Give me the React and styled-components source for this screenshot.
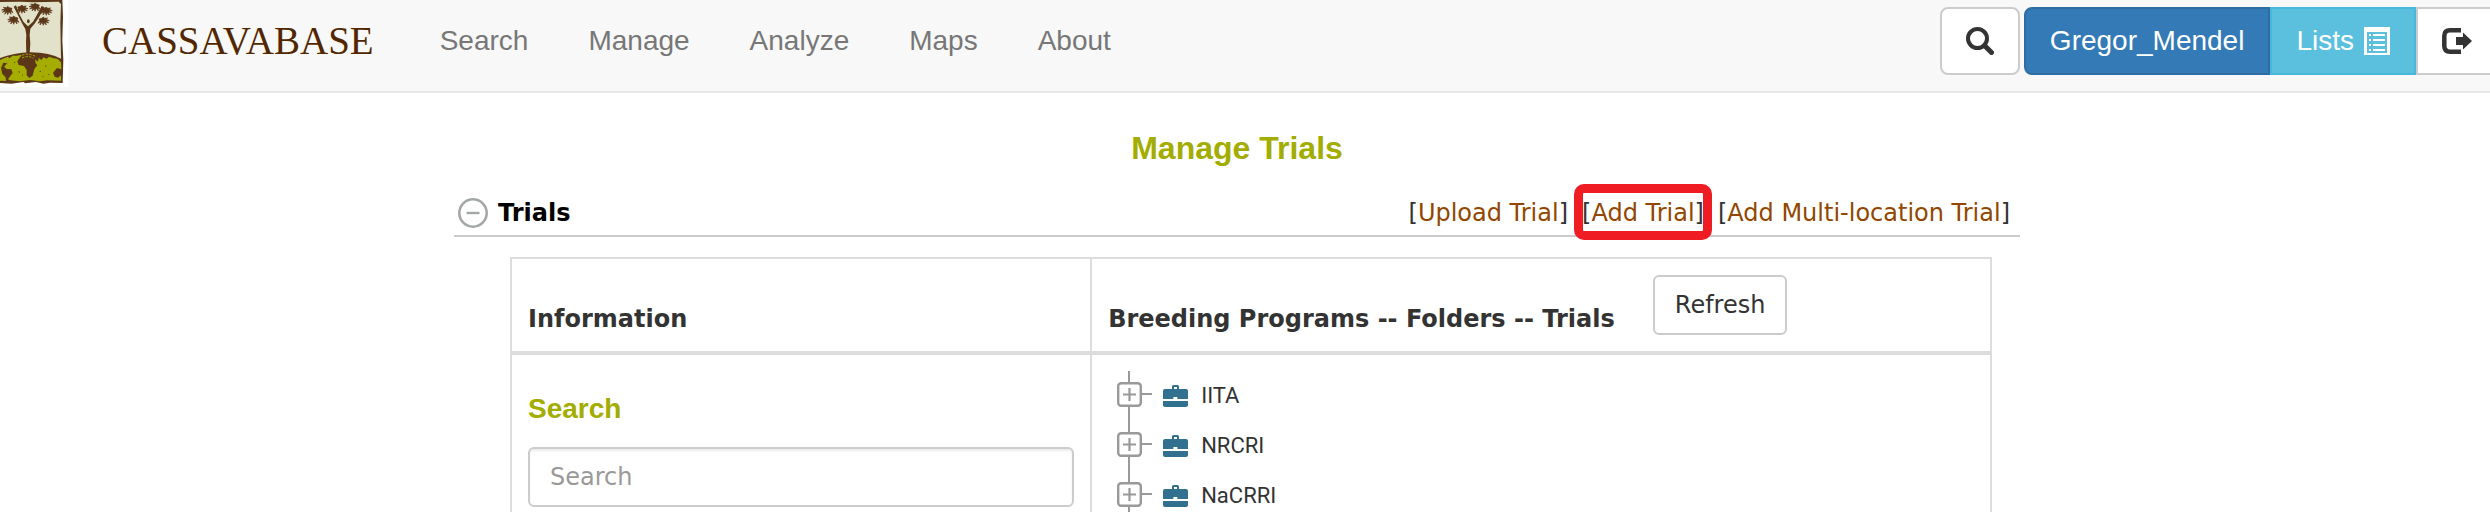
import React from "react";
import styled, { createGlobalStyle, css } from "styled-components";

const sans = '"Liberation Sans", Arial, Helvetica, sans-serif';
const verdana = 'Verdana, "DejaVu Sans", sans-serif';

const GlobalStyle = createGlobalStyle`
  *, *::before, *::after { box-sizing: border-box; }
  body {
    margin: 0;
    background: #fff;
    color: #333;
    font-family: ${verdana};
    font-size: 24px;
    line-height: 32px;
    overflow-x: hidden;
  }
`;

const Header = styled.header`
  display: flex;
  align-items: flex-start;
  height: 93px;
  background: #f8f8f8;
  border-bottom: 2px solid #e7e7e7;
  font-family: ${sans};
  overflow: hidden;
`;

const HomeLink = styled.a`
  display: flex;
  flex: none;
  text-decoration: none;
`;

const Brand = styled.a`
  margin-left: 34px;
  color: #522700;
  font-family: "Liberation Serif", "Times New Roman", serif;
  font-size: 39px;
  line-height: 82px;
  text-decoration: none;
`;

const Nav = styled.nav`
  display: flex;
  flex: 1;
  margin-left: 36px;
`;

const NavLink = styled.a`
  padding: 0 30px;
  color: #777;
  font-size: 28px;
  line-height: 82px;
  text-decoration: none;
`;

const Tools = styled.div`
  display: flex;
  flex: none;
  gap: 4px;
  margin: 7px -8px 0 0;
`;

const ButtonGroup = styled.div`
  display: flex;
`;

const tones = {
  plain: css`background: #fff; border-color: #ccc; color: #333;`,
  primary: css`background: #337ab7; border-color: #2e6da4; color: #fff;`,
  info: css`background: #5bc0de; border-color: #46b8da; color: #fff;`,
};

const corners = { all: "8px", left: "8px 0 0 8px", none: "0", right: "0 8px 8px 0" };

const ToolButton = styled.button`
  display: flex;
  align-items: center;
  gap: 10px;
  height: 68px;
  padding: 0 24px;
  border: 2px solid;
  border-radius: ${(p) => corners[p.$corners || "all"]};
  font-family: ${sans};
  font-size: 28px;
  line-height: 32px;
  cursor: pointer;
  ${(p) => tones[p.$tone || "plain"]}
`;

const Content = styled.main`
  max-width: 1582px;
  margin: 0 auto;
  padding: 37px 16px 0 0;
`;

const heading = css`
  color: #a2ad00;
  font-family: ${sans};
  font-weight: bold;
`;

const Title = styled.h1`
  ${heading}
  margin: 0 0 33px;
  font-size: 32px;
  line-height: 36px;
  text-align: center;
`;

const SectionBar = styled.div`
  display: flex;
  align-items: center;
  justify-content: space-between;
  height: 38px;
  padding: 0 10px 8px 4px;
  border-bottom: 2px solid #ccc;
`;

const SectionName = styled.div`
  display: flex;
  align-items: center;
  gap: 10px;
`;

const SectionTitle = styled.h2`
  margin: 0;
  color: #000;
  font-size: 24px;
  line-height: 28px;
`;

const IconButton = styled.button`
  display: flex;
  padding: 0;
  border: 0;
  background: none;
  cursor: pointer;
`;

const Actions = styled.div`
  display: flex;
  gap: 14px;
  line-height: 28px;
  white-space: nowrap;
`;

const Action = styled.span`
  position: relative;
  ${(p) =>
    p.$marked &&
    css`
      &::after {
        content: "";
        position: absolute;
        inset: -15px -8px -13px;
        border: 9px solid #ef1c24;
        border-radius: 10px;
        pointer-events: none;
      }
    `}
`;

const ActionLink = styled.a`
  color: #924600;
  text-decoration: none;
`;

const TableWrap = styled.div`
  padding: 20px 28px 0 56px;
`;

const Table = styled.table`
  width: 100%;
  table-layout: fixed;
  border-collapse: collapse;
`;

const HeadCell = styled.th`
  width: ${(p) => p.$width};
  padding: 16px;
  border: 2px solid #ddd;
  border-bottom-width: 4px;
  text-align: left;
  vertical-align: bottom;
`;

const BodyCell = styled.td`
  padding: 16px;
  border: 2px solid #ddd;
  vertical-align: top;
`;

const HeadRow = styled.div`
  display: flex;
  align-items: flex-end;
  gap: 38px;
`;

const RefreshButton = styled.button`
  height: 60px;
  padding: 0 20px;
  border: 2px solid #ccc;
  border-radius: 6px;
  background: #fff;
  color: #333;
  font-family: ${verdana};
  font-size: 24px;
  cursor: pointer;
`;

const SearchTitle = styled.label`
  ${heading}
  display: block;
  margin: 22px 0;
  font-size: 28px;
  line-height: 32px;
`;

const SearchInput = styled.input`
  display: block;
  width: 100%;
  height: 60px;
  padding: 0 20px;
  border: 2px solid #ccc;
  border-radius: 6px;
  background: #fff;
  box-shadow: inset 0 2px 2px rgba(0, 0, 0, 0.075);
  color: #555;
  font-family: ${verdana};
  font-size: 24px;
  &::placeholder { color: #999; opacity: 1; }
`;

const Tree = styled.ul`
  margin: 0;
  padding: 0 0 0 9px;
  list-style: none;
`;

const TreeRow = styled.li`
  display: flex;
`;

const Rail = styled.div`
  display: flex;
  flex-direction: column;
`;

const RailLine = styled.span`
  width: 2px;
  height: ${(p) => p.$length};
  margin-left: 11px;
  background: #999;
`;

const Stub = styled.span`
  width: 10px;
  height: 2px;
  margin: 22px 11px 0 0;
  background: #999;
`;

const TreeItem = styled.div`
  display: flex;
  align-items: center;
  gap: 13px;
  height: 27px;
  margin-top: 11px;
  font-family: Roboto, sans-serif;
  font-size: 22px;
`;

function Leaf({ x, y, flip }) {
  return (
    <path
      transform={`translate(${x} ${y}) scale(${flip ? -1 : 1} 1)`}
      stroke="#5b3718"
      strokeWidth="2"
      d="M14 -6 L6 -8 L1 -12 L-3 -8 L-12 -9 L-7 -5 L-17 -1 L-8 -1 L-15 6 L-5 3 L-8 12 L-1 5 L1 13 L5 4 L11 12 L10 3 L17 7 L12 -1 Z"
    />
  );
}

function Logo() {
  return (
    <svg width="68" height="87" viewBox="0 0 204 261" role="img" aria-label="Cassavabase">
      <path fill="#fff" d="M0 0H204V261H0Z" />
      <path fill="#5b3718" d="M0 0H187L189 50L187 120L190 180L188 249L150 248L130 251L108 246L76 250L70 246L35 251L0 249Z" />
      <path fill="#e2e2cb" d="M0 6L60 5L100 7L176 5L183 12L181 70L183 176Q150 158 92 157Q40 159 0 174Z" />
      <path
        fill="#a4ad00"
        d="M0 180L14 174L24 170L28 175L38 167L52 167L65 164L61 170L52 184L56 195L72 198L80 210L80 226L88 234L98 227L103 207L112 196L107 190L105 178L114 185L116 174L125 180L130 172L140 176L147 170L158 174L172 176L177 181L183 187L184 208L171 204L159 218L164 230L174 233L183 226V242L142 241L120 244L90 240L60 244L31 241L24 238L31 228L38 219L34 208L20 207L12 200L22 190L10 188L3 204L7 222L17 232L18 243L0 242Z"
      />
      <g fill="#5b3718">
        <path d="M79 160L78 125L79 105L76 87L66 70L55 47L41 20L48 16L58 42L70 65L84 79L99 65L111 44L125 18L134 22L116 53L103 72L91 86L89 106L91 130L89 160Z" />
        <ellipse cx="85" cy="64" rx="4" ry="6" />
        <Leaf x="22" y="31" />
        <Leaf x="67" y="27" flip />
        <Leaf x="40" y="60" />
        <Leaf x="104" y="21" />
        <Leaf x="140" y="33" flip />
        <Leaf x="131" y="63" flip />
        <path d="M55 213l5 3-3 3zM66 223l4 2-4 2zM120 211l3 4-4 1zM135 196l5 2-4 2zM145 221l4 3-4 1zM127 228l4 1-3 3zM42 185l4 3-3 2z" />
      </g>
      <path fill="none" stroke="#a4ad00" strokeWidth="3" strokeDasharray="7 4" d="M56 170Q84 155 109 171M66 174Q84 165 101 175" />
    </svg>
  );
}

function SearchIcon() {
  return (
    <svg width="28" height="28" viewBox="0 0 28 28" fill="none" stroke="#333" aria-hidden="true">
      <circle cx="11.5" cy="11.5" r="9.5" strokeWidth="4" />
      <path d="M18.5 18.5L25.5 25.5" strokeWidth="5" strokeLinecap="round" />
    </svg>
  );
}

function ListIcon() {
  return (
    <svg width="26" height="28" viewBox="0 0 26 28" fill="#fff" aria-hidden="true">
      <path fillRule="evenodd" d="M0 0H26V28H0ZM3 5V26H23V5Z" />
      <path d="M5 7h2v2H5zM9 7h12v2H9zM5 12h2v2H5zM9 12h12v2H9zM5 17h2v2H5zM9 17h12v2H9zM5 22h2v2H5zM9 22h12v2H9z" />
    </svg>
  );
}

function LogoutIcon() {
  return (
    <svg width="30" height="28" viewBox="0 0 30 28" aria-hidden="true">
      <path fill="none" stroke="#333" strokeWidth="4.5" d="M19 3.3H8Q2.3 3.3 2.3 9V19Q2.3 24.7 8 24.7H19" />
      <path fill="#333" d="M14 10H21V5.5L30 14L21 22.5V18H14Z" />
    </svg>
  );
}

function CollapseIcon() {
  return (
    <svg width="30" height="30" viewBox="0 0 30 30" fill="none" stroke="#a3a8a7" aria-hidden="true">
      <circle cx="15" cy="15" r="13.7" strokeWidth="2.6" />
      <path d="M8.5 15H21.5" strokeWidth="2.4" />
    </svg>
  );
}

function ExpandIcon() {
  return (
    <svg width="25" height="25" viewBox="0 0 25 25" fill="none" stroke="#999" aria-hidden="true">
      <rect x="1.2" y="1.2" width="22.6" height="22.6" rx="3" strokeWidth="2.4" />
      <path d="M6 12.5H19M12.5 6V19" strokeWidth="2.2" />
    </svg>
  );
}

function BriefcaseIcon() {
  return (
    <svg width="25" height="22" viewBox="0 0 75 66" fill="#31708f" aria-hidden="true">
      <path
        fillRule="evenodd"
        d="M27 12V5Q27 0 32 0H43Q48 0 48 5V12H69Q75 12 75 18V42H43V36H31V42H0V18Q0 12 6 12ZM33 6V12H42V6Z"
      />
      <path d="M0 48H75V60Q75 66 69 66H6Q0 66 0 60Z" />
    </svg>
  );
}

const menu = ["Search", "Manage", "Analyze", "Maps", "About"];
const programs = ["IITA", "NRCRI", "NaCRRI"];
const actions = [
  { label: "Upload Trial" },
  { label: "Add Trial", marked: true },
  { label: "Add Multi-location Trial" },
];

export default function App() {
  return (
    <>
      <GlobalStyle />
      <Header>
        <HomeLink href="#home"><Logo /></HomeLink>
        <Brand href="#home">CASSAVABASE</Brand>
        <Nav>
          {menu.map((name) => (
            <NavLink key={name} href={`#${name.toLowerCase()}`}>{name}</NavLink>
          ))}
        </Nav>
        <Tools>
          <ToolButton aria-label="Search site"><SearchIcon /></ToolButton>
          <ButtonGroup>
            <ToolButton $tone="primary" $corners="left">Gregor_Mendel</ToolButton>
            <ToolButton $tone="info" $corners="none">Lists <ListIcon /></ToolButton>
            <ToolButton $corners="right" aria-label="Log out"><LogoutIcon /></ToolButton>
          </ButtonGroup>
        </Tools>
      </Header>
      <Content>
        <Title>Manage Trials</Title>
        <SectionBar>
          <SectionName>
            <IconButton aria-label="Collapse trials"><CollapseIcon /></IconButton>
            <SectionTitle>Trials</SectionTitle>
          </SectionName>
          <Actions>
            {actions.map(({ label, marked }) => (
              <Action key={label} $marked={marked}>
                [<ActionLink href="#trials">{label}</ActionLink>]
              </Action>
            ))}
          </Actions>
        </SectionBar>
        <TableWrap>
          <Table>
            <thead>
              <tr>
                <HeadCell $width="39.2%">Information</HeadCell>
                <HeadCell>
                  <HeadRow>
                    Breeding Programs -- Folders -- Trials
                    <RefreshButton>Refresh</RefreshButton>
                  </HeadRow>
                </HeadCell>
              </tr>
            </thead>
            <tbody>
              <tr>
                <BodyCell>
                  <SearchTitle htmlFor="tree-search">Search</SearchTitle>
                  <SearchInput id="tree-search" type="text" placeholder="Search" />
                </BodyCell>
                <BodyCell>
                  <Tree>
                    {programs.map((name) => (
                      <TreeRow key={name}>
                        <Rail>
                          <RailLine $length="11px" />
                          <IconButton aria-label={`Expand ${name}`}><ExpandIcon /></IconButton>
                          <RailLine $length="14px" />
                        </Rail>
                        <Stub />
                        <TreeItem><BriefcaseIcon />{name}</TreeItem>
                      </TreeRow>
                    ))}
                  </Tree>
                </BodyCell>
              </tr>
            </tbody>
          </Table>
        </TableWrap>
      </Content>
    </>
  );
}
